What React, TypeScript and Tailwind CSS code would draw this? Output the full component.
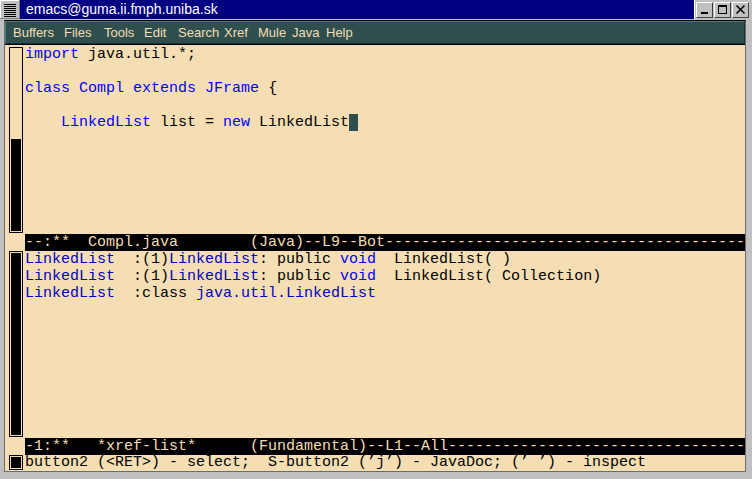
import React from "react";

const KW = "text-[#0000ff]";
const REF = "text-[#0000c0]";

const menuItems: { label: string; w: string }[] = [
  { label: "Buffers", w: "w-[51px]" },
  { label: "Files", w: "w-[40px]" },
  { label: "Tools", w: "w-[40px]" },
  { label: "Edit", w: "w-[34px]" },
  { label: "Search", w: "w-[46px]" },
  { label: "Xref", w: "w-[34px]" },
  { label: "Mule", w: "w-[34px]" },
  { label: "Java", w: "w-[34px]" },
  { label: "Help", w: "w-[34px]" },
];

const pad = (s: string) => s + "-".repeat(Math.max(0, 82 - s.length));

const WindowIcon = () => (
  <svg width="20" height="19" viewBox="0 0 20 19" className="block">
    <rect x="0" y="0" width="20" height="19" fill="#c0c0c0" />
    <path d="M0 0.5H20M0.5 0V19" stroke="#ffffff" />
    <path d="M0 18.5H20M19.5 0V19" stroke="#808080" />
    {[4, 6, 8, 10, 12, 14, 16].map((y) => (
      <rect key={y} x="4" y={y} width="12" height="1" fill="#000" />
    ))}
  </svg>
);

const TitleButton = ({ kind }: { kind: "min" | "max" | "close" }) => (
  <div className="w-[17px] h-[16px] bg-[#c0c0c0] border-t border-l border-white border-r border-b border-r-[#404040] border-b-[#404040] flex items-center justify-center">
    <svg width="13" height="12" viewBox="0 0 13 12">
      {kind === "min" && <rect x="3" y="8" width="7" height="2" fill="#000" />}
      {kind === "max" && (
        <>
          <rect x="2.5" y="1.5" width="8" height="8" fill="none" stroke="#000" />
          <rect x="2" y="1" width="9" height="2" fill="#000" />
        </>
      )}
      {kind === "close" && (
        <path d="M2.5 1.5L10.5 9.5M10.5 1.5L2.5 9.5" stroke="#000" strokeWidth="1.6" />
      )}
    </svg>
  </div>
);

// full = whole buffer visible, thumb fills the bar
const Scrollbar = ({ h, thumb, mt, full }: { h: string; thumb?: string; mt: string; full?: boolean }) => (
  <div className={`ml-[4px] w-[14px] ${h} ${mt} border border-black p-px flex flex-col`}>
    {full ? (
      <div className="flex-1 bg-black" />
    ) : (
      <>
        <div className="flex-1" />
        <div className={`${thumb} bg-black`} />
      </>
    )}
  </div>
);

const ModeLine = ({ text }: { text: string }) => (
  <div className="h-[17px] ml-[20px] bg-black text-[#f5deb3] leading-[17px] whitespace-pre overflow-hidden">
    {pad(text)}
  </div>
);

export default function App() {
  return (
    <div className="w-[752px] h-[479px] bg-[#c0c0c0] flex flex-col overflow-hidden">
      {/* title bar */}
      <div className="h-[19px] flex flex-none">
        <WindowIcon />
        <div className="flex-1 bg-[#000080] text-white text-[14px] leading-[19px] pl-[6px] font-['Liberation_Sans',Arial,sans-serif]">
          emacs@guma.ii.fmph.uniba.sk
        </div>
        <div className="w-[58px] bg-[#c0c0c0] border-l border-white flex items-start gap-[1px] pt-[2px] pl-[1px]">
          <TitleButton kind="min" />
          <TitleButton kind="max" />
          <TitleButton kind="close" />
        </div>
      </div>
      <div className="h-px" />

      {/* frame */}
      <div className="ml-[4px] mr-[6px] flex-none border-t border-t-black border-l border-r border-b border-[#6b6b6b] bg-[#f5deb3] font-['Liberation_Mono','Courier_New',monospace] text-[15px] text-black">
        {/* menu bar */}
        <div className="h-[24px] border-b border-black">
          <div className="h-[23px] bg-[#2f4f4f] border-t border-l border-[#587878] border-r border-b border-r-[#1c3232] border-b-[#1c3232] flex items-center pl-[7px] text-[13px] text-[#f5deb3] font-['Liberation_Sans',Arial,sans-serif]">
            {menuItems.map((m) => (
              <span key={m.label} className={`${m.w} flex-none`}>
                {m.label}
              </span>
            ))}
          </div>
        </div>

        {/* top window */}
        <div className="h-[189px] flex">
          <div className="w-[20px] flex-none">
            <Scrollbar h="h-[186px]" thumb="h-[92px]" mt="mt-[2px]" />
          </div>
          <div className="pt-px leading-[17px] whitespace-pre">
            <div>
              <span className={KW}>import</span> java.util.*;
            </div>
            <div>&nbsp;</div>
            <div>
              <span className={KW}>class</span> <span className={KW}>Compl</span>{" "}
              <span className={KW}>extends</span> <span className={KW}>JFrame</span> {"{"}
            </div>
            <div>&nbsp;</div>
            <div className="flex">
              <span>
                {"    "}
                <span className={KW}>LinkedList</span> list = <span className={KW}>new</span> LinkedList
              </span>
              <span className="inline-block w-[9px] h-[17px] bg-[#2f4f4f]" />
            </div>
          </div>
        </div>
        <ModeLine text="--:**  Compl.java        (Java)--L9--Bot" />

        {/* xref window */}
        <div className="h-[187px] flex">
          <div className="w-[20px] flex-none">
            <Scrollbar h="h-[186px]" mt="mt-0" full />
          </div>
          <div className="leading-[17px] whitespace-pre">
            <div>
              <span className={REF}>LinkedList</span>  :(1)<span className={REF}>LinkedList</span>: public{" "}
              <span className={KW}>void</span>  LinkedList( )
            </div>
            <div>
              <span className={REF}>LinkedList</span>  :(1)<span className={REF}>LinkedList</span>: public{" "}
              <span className={KW}>void</span>  LinkedList( Collection)
            </div>
            <div>
              <span className={REF}>LinkedList</span>  :class <span className={REF}>java.util.LinkedList</span>
            </div>
          </div>
        </div>
        <ModeLine text="-1:**   *xref-list*      (Fundamental)--L1--All" />

        {/* minibuffer */}
        <div className="h-[16px] flex">
          <div className="w-[20px] flex-none">
            <Scrollbar h="h-[15px]" mt="mt-0" full />
          </div>
          <div className="leading-[16px] whitespace-pre">
            button2 (&lt;RET&gt;) - select;  S-button2 (’j’) - JavaDoc; (’ ’) - inspect
          </div>
        </div>
      </div>
    </div>
  );
}
